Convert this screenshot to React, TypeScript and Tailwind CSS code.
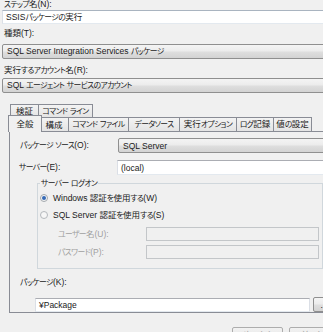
import React from "react";

function J({ t }: { t: string }) {
  const parts = t.split(/([\u3040-\u30ff]+)/);
  return (
    <span className="whitespace-pre">
      {parts.map((p, i) =>
        i % 2 ? (
          <span key={i} className="text-[7.8px] tracking-[-0.6px]">
            {p}
          </span>
        ) : (
          <React.Fragment key={i}>{p}</React.Fragment>
        )
      )}
    </span>
  );
}

function Combo({ t, className }: { t: string; className: string }) {
  return (
    <div
      className={
        "h-[15px] shrink-0 border border-[#8f8f8f] rounded-[2px] bg-[linear-gradient(#f4f4f4,#ececec_45%,#dedede_55%,#d3d3d3)] flex items-center pl-[4px] leading-[10px] whitespace-nowrap " +
        className
      }
    >
      <J t={t} />
    </div>
  );
}

function TextBox({ t, className }: { t: string; className: string }) {
  return (
    <div
      className={
        "shrink-0 border border-[#abadb3] border-l-[#dbdfe6] border-r-[#dbdfe6] border-b-[#e3e9ef] bg-white flex items-center pl-[3px] leading-[10px] whitespace-nowrap " +
        className
      }
    >
      <J t={t} />
    </div>
  );
}

function Tab({ t, className }: { t: string; className: string }) {
  return (
    <div
      className={
        "shrink-0 border border-b-0 border-[#898c95] bg-[linear-gradient(#f3f3f3,#e4e4e4)] flex items-center justify-center leading-[10px] whitespace-nowrap " +
        className
      }
    >
      <J t={t} />
    </div>
  );
}

export default function App() {
  return (
    <div className="w-[323px] h-[332px] overflow-hidden bg-[#f0f0f0] text-[#1a1a1a] text-[8.5px] font-['Liberation_Sans','Noto_Sans_CJK_JP',sans-serif] [font-feature-settings:'palt']">
      <div className="flex flex-col">
        <div className="-mt-[1px] ml-[4px] h-[10px] leading-[10px] whitespace-nowrap">
          <J t="ステップ名(N):" />
        </div>
        <TextBox t="SSISパッケージの実行" className="mt-[1px] ml-[2px] h-[14px] w-[340px] border-t-[#a9b4c0]" />

        <div className="mt-[4px] ml-[4px] h-[10px] leading-[10px] whitespace-nowrap">
          <J t="種類(T):" />
        </div>
        <Combo t="SQL Server Integration Services パッケージ" className="mt-[6px] ml-[2px] w-[340px]" />

        <div className="mt-[6px] ml-[4px] h-[10px] leading-[10px] whitespace-nowrap">
          <J t="実行するアカウント名(R):" />
        </div>
        <Combo t="SQL エージェント サービスのアカウント" className="mt-[3px] ml-[2px] w-[340px]" />

        {/* Tab control */}
        <div className="mt-[11px] ml-[9px] flex flex-col">
          <div className="flex h-[13px] pl-[1px]">
            <Tab t="検証" className="w-[29px]" />
            <Tab t="コマンド ライン" className="-ml-px w-[55px]" />
          </div>
          <div className="flex items-end h-[14px] pl-[1px]">
            <div className="relative z-10 -mx-[2px] -mb-px h-[17px] w-[34px] shrink-0 border border-b-0 border-[#898c95] bg-[#f0f0f0] flex items-center justify-center leading-[10px] pb-[1px]">
              全般
            </div>
            <Tab t="構成" className="-ml-px w-[30px] h-[14px]" />
            <Tab t="コマンド ファイル" className="-ml-px w-[61px] h-[14px]" />
            <Tab t="データソース" className="-ml-px w-[52px] h-[14px]" />
            <Tab t="実行オプション" className="-ml-px w-[58px] h-[14px]" />
            <Tab t="ログ記録" className="-ml-px w-[38px] h-[14px]" />
            <Tab t="値の設定" className="-ml-px w-[39px] h-[14px]" />
          </div>

          <div className="h-[182px] w-[330px] border border-[#898c95] bg-[#f0f0f0] flex flex-col">
            <div className="flex items-center mt-[6px] pl-[10px]">
              <div className="w-[98px] shrink-0 leading-[10px] whitespace-nowrap">
                <J t="パッケージ ソース(O):" />
              </div>
              <Combo t="SQL Server" className="w-[220px]" />
            </div>

            <div className="flex items-center mt-[7px] pl-[9px]">
              <div className="w-[98px] shrink-0 leading-[10px] whitespace-nowrap">
                <J t="サーバー(E):" />
              </div>
              <TextBox t="(local)" className="h-[15px] w-[220px]" />
            </div>

            <fieldset className="mt-[3px] ml-[27px] w-[286px] border border-[#d0d7dc] pb-[9px] flex flex-col">
              <legend className="ml-[2px] px-[1px] h-[10px] leading-[10px] whitespace-nowrap">
                <J t="サーバー ログオン" />
              </legend>
              <div className="mt-[5px] h-[10px] flex items-center ml-[2px]">
                <span className="w-[8px] h-[8px] shrink-0 rounded-full border border-[#a3a8ad] bg-[#f6f6f6] flex items-center justify-center">
                  <span className="w-[4px] h-[4px] rounded-full bg-[#3569b5]" />
                </span>
                <span className="ml-[5px] leading-[10px] whitespace-nowrap">
                  <J t="Windows 認証を使用する(W)" />
                </span>
              </div>
              <div className="mt-[7px] h-[10px] flex items-center ml-[2px]">
                <span className="w-[8px] h-[8px] shrink-0 rounded-full border border-[#b4b8bc] bg-[#f6f6f6]" />
                <span className="ml-[5px] leading-[10px] whitespace-nowrap">
                  <J t="SQL Server 認証を使用する(S)" />
                </span>
              </div>
              <div className="mt-[7px] h-[14px] flex items-center ml-[20px]">
                <div className="w-[88px] shrink-0 leading-[10px] text-[#a0a0a0] whitespace-nowrap">
                  <J t="ユーザー名(U):" />
                </div>
                <div className="h-[14px] w-[173px] shrink-0 border border-[#c3c6c9] bg-[#f0f0f0]" />
              </div>
              <div className="mt-[4px] h-[14px] flex items-center ml-[20px]">
                <div className="w-[88px] shrink-0 leading-[10px] text-[#a0a0a0] whitespace-nowrap">
                  <J t="パスワード(P):" />
                </div>
                <div className="h-[14px] w-[173px] shrink-0 border border-[#c3c6c9] bg-[#f0f0f0]" />
              </div>
            </fieldset>

            <div className="mt-[8px] pl-[10px] h-[10px] leading-[10px] whitespace-nowrap">
              <J t="パッケージ(K):" />
            </div>
            <div className="mt-[10px] flex items-center">
              <TextBox t="¥Package" className="ml-[25px] h-[14px] w-[275px]" />
              <div className="ml-[3px] h-[15px] w-[22px] shrink-0 border border-[#8f8f8f] rounded-[2px] bg-[linear-gradient(#f4f4f4,#ececec_45%,#dedede_55%,#d3d3d3)] flex items-center justify-center leading-[10px]">
                ...
              </div>
            </div>
          </div>
        </div>

        <div className="mt-[14px] flex pl-[232px] gap-[6px]">
          <div className="w-[51px] h-[17px] shrink-0 border border-[#adadad] rounded-[2px] bg-[linear-gradient(#f2f2f2,#ebebeb_45%,#dddddd_55%,#cfcfcf)] flex items-center justify-center leading-[10px] text-[#a0a0a0]">
            <J t="次へ(N)" />
          </div>
          <div className="w-[51px] h-[17px] shrink-0 border border-[#adadad] rounded-[2px] bg-[linear-gradient(#f2f2f2,#ebebeb_45%,#dddddd_55%,#cfcfcf)] flex items-center justify-center leading-[10px] text-[#a0a0a0]">
            <J t="前へ(P)" />
          </div>
        </div>
      </div>
    </div>
  );
}
